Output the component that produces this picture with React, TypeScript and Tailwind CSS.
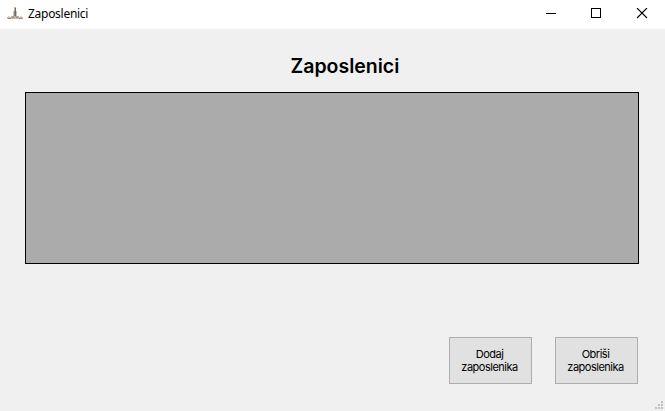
import React from 'react';

function AppIcon() {
  return (
    <svg width="16" height="16" viewBox="0 0 16 16" className="shrink-0">
      <path d="M7 1h2v4H7z" fill="#b9b1aa" />
      <path d="M6.5 5h3v6h-3z" fill="#93887e" />
      <path d="M8 2h1v8H8z" fill="#6f665f" />
      <path d="M4 10h8v2H4z" fill="#b3a9a0" />
      <path d="M0 11h16v2H0z" fill="#c4bbb3" />
      <path d="M1 10h2v1H1zM13 10h2v1h-2z" fill="#ded8d2" />
      <path d="M5 11h2v1H5zM9 11h2v1H9zM1 12h3v1H1zM12 12h3v1h-3z" fill="#978c82" />
    </svg>
  );
}

function TitleBar() {
  return (
    <header className="flex h-[29px] bg-white">
      <div className="flex flex-1 items-start pl-[7px] pt-[6px]">
        <AppIcon />
        <span className="ml-[5px] mt-px text-[12px] leading-[14px] tracking-[-0.28px]">Zaposlenici</span>
      </div>
      <div className="flex pt-[8px]">
        <svg width="119" height="11" viewBox="0 0 119 11" fill="none" stroke="#000">
          <path d="M0 5.5h10" />
          <rect x="45.5" y="0.5" width="9" height="9" />
          <path d="M91 0l10 10M101 0L91 10" strokeWidth="1.1" />
        </svg>
      </div>
    </header>
  );
}

function ActionButton({ first, second }: { first: string; second: string }) {
  return (
    <button className="flex h-[47px] w-[83px] flex-col items-center justify-center whitespace-nowrap border border-[#adadad] bg-[#e1e1e1] pr-[2px] text-[11px] leading-[13px] tracking-[-0.5px]">
      <span>{first}</span>
      <span>{second}</span>
    </button>
  );
}

export default function App() {
  return (
    <div className="flex h-[411px] w-[665px] flex-col overflow-hidden bg-[#f0f0f0] font-['Noto_Sans',sans-serif] text-black">
      <TitleBar />
      <main className="flex flex-1 flex-col pl-[25px]">
        <h1 className="ml-[265.5px] mt-[25px] h-[38px] whitespace-nowrap font-['Inter',sans-serif] text-[19.5px] font-semibold leading-[25px]">
          Zaposlenici
        </h1>
        <div className="h-[172px] w-[614px] border border-black bg-[#ababab]" />
        <div className="mt-[73px] flex gap-[23px] pl-[424px] font-['Inter',sans-serif]">
          <ActionButton first="Dodaj" second="zaposlenika" />
          <ActionButton first="Obriši" second="zaposlenika" />
        </div>
        <div className="mt-auto flex justify-end pb-[2px] pr-[2px]">
          <svg width="8" height="8" viewBox="0 0 8 8" fill="#bfbfbf" shapeRendering="crispEdges">
            <path d="M6 0h2v2H6zM3 3h2v2H3zM6 3h2v2H6zM0 6h2v2H0zM3 6h2v2H3zM6 6h2v2H6z" />
          </svg>
        </div>
      </main>
    </div>
  );
}
